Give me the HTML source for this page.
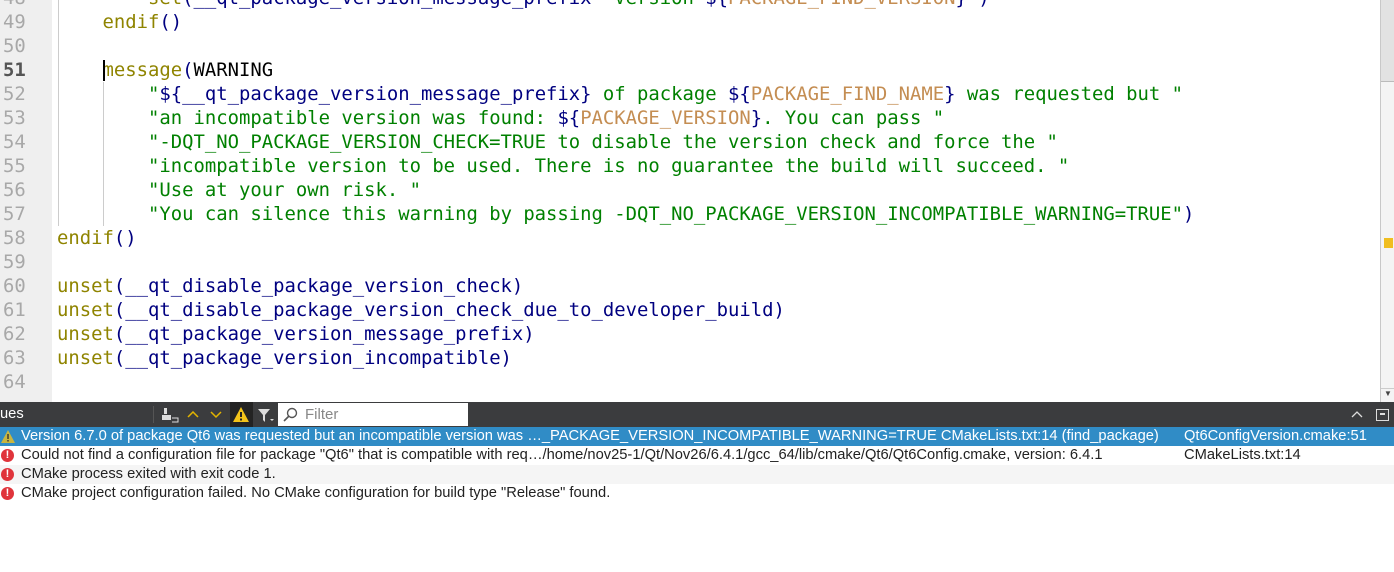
<!DOCTYPE html>
<html><head><meta charset="utf-8"><style>
body{margin:0;width:1394px;height:572px;overflow:hidden;background:#fff;position:relative;font-family:"Liberation Sans",sans-serif}
.gut{position:absolute;left:0;top:0;width:52px;height:402px;background:#efefef}
.ln{position:absolute;left:3px;width:40px;font:18.9px "DejaVu Sans Mono",monospace;color:#a8a8a8;height:24px;line-height:24px}
.cl{position:absolute;left:57px;white-space:pre;font:18.9px "DejaVu Sans Mono",monospace;color:#000080;height:24px;line-height:24px}
.k{color:#8f8400}.s{color:#008000}.v{color:#c48d52}.n{color:#000}
.guide{position:absolute;width:1px;background:#ccc}
.sb{position:absolute;left:1380px;top:0;width:14px;height:402px;background:#f4f4f4;border-left:1px solid #c8c8c8}
.bar{position:absolute;left:0;top:402px;width:1394px;height:25px;background:#3b3c3e;color:#fff;font-size:14.7px}
.row{position:absolute;left:0;width:1394px;height:19px;line-height:19px;font-size:14.7px;color:#222;white-space:nowrap}
.row span{position:absolute}
.ic{position:absolute;left:1px;top:3px;width:13px;height:13px;border-radius:50%;background:#e0343b;color:#fff;font-size:11px;font-weight:bold;line-height:13px;text-align:center}
.w{position:relative;top:1px}
</style></head><body>
<div class="gut"></div>
<div class="guide" style="left:58px;top:0;height:226px"></div>
<div class="guide" style="left:103px;top:82px;height:144px"></div>
<div class="w">
<div class="ln" style="top:-15px">48</div>
<div class="ln" style="top:9px">49</div>
<div class="ln" style="top:33px">50</div>
<div class="ln" style="top:57px;color:#555;font-weight:bold">51</div>
<div class="ln" style="top:81px">52</div>
<div class="ln" style="top:105px">53</div>
<div class="ln" style="top:129px">54</div>
<div class="ln" style="top:153px">55</div>
<div class="ln" style="top:177px">56</div>
<div class="ln" style="top:201px">57</div>
<div class="ln" style="top:225px">58</div>
<div class="ln" style="top:249px">59</div>
<div class="ln" style="top:273px">60</div>
<div class="ln" style="top:297px">61</div>
<div class="ln" style="top:321px">62</div>
<div class="ln" style="top:345px">63</div>
<div class="ln" style="top:369px">64</div>
<div class="cl" style="top:-15px">        <span class="k">set</span>(__qt_package_version_message_prefix <span class="s">"Version </span>${<span class="v">PACKAGE_FIND_VERSION</span>}<span class="s">"</span>)</div>
<div class="cl" style="top:9px">    <span class="k">endif</span>()</div>
<div class="cl" style="top:57px">    <span class="k">message</span>(<span class="n">WARNING</span></div>
<div style="position:absolute;left:103px;top:59px;width:2px;height:21px;background:#000"></div>
<div class="cl" style="top:81px">        <span class="s">"</span>${__qt_package_version_message_prefix}<span class="s"> of package </span>${<span class="v">PACKAGE_FIND_NAME</span>}<span class="s"> was requested but "</span></div>
<div class="cl" style="top:105px">        <span class="s">"an incompatible version was found: </span>${<span class="v">PACKAGE_VERSION</span>}<span class="s">. You can pass "</span></div>
<div class="cl s" style="top:129px">        "-DQT_NO_PACKAGE_VERSION_CHECK=TRUE to disable the version check and force the "</div>
<div class="cl s" style="top:153px">        "incompatible version to be used. There is no guarantee the build will succeed. "</div>
<div class="cl s" style="top:177px">        "Use at your own risk. "</div>
<div class="cl" style="top:201px">        <span class="s">"You can silence this warning by passing -DQT_NO_PACKAGE_VERSION_INCOMPATIBLE_WARNING=TRUE"</span>)</div>
<div class="cl" style="top:225px"><span class="k">endif</span>()</div>
<div class="cl" style="top:273px"><span class="k">unset</span>(__qt_disable_package_version_check)</div>
<div class="cl" style="top:297px"><span class="k">unset</span>(__qt_disable_package_version_check_due_to_developer_build)</div>
<div class="cl" style="top:321px"><span class="k">unset</span>(__qt_package_version_message_prefix)</div>
<div class="cl" style="top:345px"><span class="k">unset</span>(__qt_package_version_incompatible)</div>
</div>
<div class="sb"><div style="position:absolute;left:0;top:0;width:14px;height:81px;background:#e2e2e2;border-bottom:1px solid #bbb"></div>
<div style="position:absolute;left:3px;top:238px;width:9px;height:10px;background:#f0be20"></div>
<div style="position:absolute;left:0;top:388px;width:14px;border-top:1px solid #ccc;color:#444;font-size:8px;text-align:center">▼</div></div>
<div class="bar">
<span style="position:absolute;left:0;top:4px">ues</span>
<div style="position:absolute;left:153px;top:4px;width:1px;height:17px;background:#555"></div>
<svg style="position:absolute;left:160px;top:4px" width="20" height="18"><rect x="4" y="2" width="3" height="6" fill="#ddd"/><path d="M2 9h9v5H2z" fill="#ddd"/><path d="M12 12h6v4h-6" stroke="#ddd" fill="none"/></svg>
<svg style="position:absolute;left:187px;top:9px" width="12" height="8"><path d="M1 6l5-5 5 5" stroke="#e3b400" stroke-width="1.5" fill="none"/></svg>
<svg style="position:absolute;left:210px;top:9px" width="12" height="8"><path d="M1 1l5 5 5-5" stroke="#e3b400" stroke-width="1.5" fill="none"/></svg>
<div style="position:absolute;left:230px;top:0;width:23px;height:25px;background:#232323"></div>
<svg style="position:absolute;left:232px;top:4px" width="18" height="17"><path d="M9 1L17 16H1z" fill="#f2c31a"/><rect x="8" y="6" width="2" height="5" fill="#222"/><rect x="8" y="12.5" width="2" height="2" fill="#222"/></svg>
<svg style="position:absolute;left:257px;top:6px" width="18" height="16"><path d="M1 1h12l-5 6v7l-2-2V7z" fill="#ddd"/><path d="M13 11h4l-2 2z" fill="#ddd"/></svg>
<div style="position:absolute;left:278px;top:1px;width:190px;height:23px;background:#fff;color:#888;font-size:15px;line-height:23px">
<svg style="position:absolute;left:4px;top:4px" width="18" height="16"><circle cx="10" cy="6" r="4.5" stroke="#555" stroke-width="1.4" fill="none"/><path d="M7 9l-5 5" stroke="#555" stroke-width="1.6"/></svg>
<span style="position:absolute;left:27px">Filter</span></div>
<svg style="position:absolute;left:1351px;top:8px" width="12" height="8"><path d="M1 7l5-5 5 5" stroke="#ddd" stroke-width="1.3" fill="none"/></svg>
<div style="position:absolute;left:1376px;top:7px;width:11px;height:10px;border:1px solid #ddd"><div style="position:absolute;left:3px;top:3px;width:5px;height:2px;background:#ddd"></div></div>
</div>
<div class="row" style="top:427px;background:#308cc6;color:#fff">
<svg style="position:absolute;left:1px;top:3px" width="14" height="13"><path d="M7 0L14 13H0z" fill="#c8b640"/><rect x="6.3" y="4" width="1.4" height="5" fill="#333"/><rect x="6.3" y="10" width="1.4" height="1.5" fill="#333"/></svg>
<span style="left:21px">Version 6.7.0 of package Qt6 was requested but an incompatible version was …_PACKAGE_VERSION_INCOMPATIBLE_WARNING=TRUE CMakeLists.txt:14 (find_package)</span>
<span style="left:1184px">Qt6ConfigVersion.cmake:51</span></div>
<div class="row" style="top:446px"><div class="ic">!</div><span style="left:21px">Could not find a configuration file for package "Qt6" that is compatible with req…/home/nov25-1/Qt/Nov26/6.4.1/gcc_64/lib/cmake/Qt6/Qt6Config.cmake, version: 6.4.1</span><span style="left:1184px">CMakeLists.txt:14</span></div>
<div class="row" style="top:465px;background:#f5f5f5"><div class="ic">!</div><span style="left:21px">CMake process exited with exit code 1.</span></div>
<div class="row" style="top:484px"><div class="ic">!</div><span style="left:21px">CMake project configuration failed. No CMake configuration for build type "Release" found.</span></div>
</body></html>
